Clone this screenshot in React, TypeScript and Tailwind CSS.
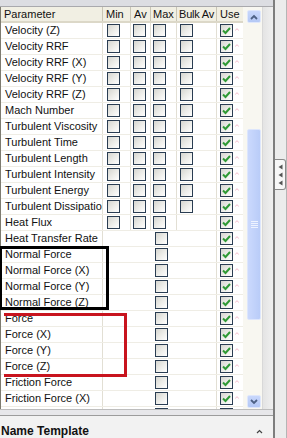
import React from 'react';

type Kind = 'full' | 'noBulk' | 'merged';

const rows: { name: string; kind: Kind }[] = [
  { name: 'Velocity (Z)', kind: 'full' },
  { name: 'Velocity RRF', kind: 'full' },
  { name: 'Velocity RRF (X)', kind: 'full' },
  { name: 'Velocity RRF (Y)', kind: 'full' },
  { name: 'Velocity RRF (Z)', kind: 'full' },
  { name: 'Mach Number', kind: 'full' },
  { name: 'Turbulent Viscosity', kind: 'full' },
  { name: 'Turbulent Time', kind: 'full' },
  { name: 'Turbulent Length', kind: 'full' },
  { name: 'Turbulent Intensity', kind: 'full' },
  { name: 'Turbulent Energy', kind: 'full' },
  { name: 'Turbulent Dissipation', kind: 'full' },
  { name: 'Heat Flux', kind: 'noBulk' },
  { name: 'Heat Transfer Rate', kind: 'merged' },
  { name: 'Normal Force', kind: 'merged' },
  { name: 'Normal Force (X)', kind: 'merged' },
  { name: 'Normal Force (Y)', kind: 'merged' },
  { name: 'Normal Force (Z)', kind: 'merged' },
  { name: 'Force', kind: 'merged' },
  { name: 'Force (X)', kind: 'merged' },
  { name: 'Force (Y)', kind: 'merged' },
  { name: 'Force (Z)', kind: 'merged' },
  { name: 'Friction Force', kind: 'merged' },
  { name: 'Friction Force (X)', kind: 'merged' },
  // next row only peeks in at the bottom edge
  { name: '', kind: 'merged' },
];

const Box: React.FC<{ checked?: boolean }> = ({ checked }) => (
  <div className="w-[13px] h-[13px] border border-[#2a3d52] bg-gradient-to-br from-[#d6d6d0] via-[#ecece8] to-white flex items-center justify-center">
    {checked && (
      <svg width="9" height="9" viewBox="0 0 9 9">
        <path d="M1 4.5 L3.5 7 L8 2" fill="none" stroke="#2f9a35" strokeWidth="2" />
      </svg>
    )}
  </div>
);

const Mark = () => (
  <svg width="4" height="4" viewBox="0 0 4 4" className="ml-[2px] self-start mt-[3px]">
    <path d="M0.5 3.5 Q2 0 3.5 3.5" fill="none" stroke="#f2bccb" strokeWidth="1" />
  </svg>
);

const Row: React.FC<{ name: string; kind: Kind }> = ({ name, kind }) => (
  <div className="grid grid-cols-[102px_28px_20px_26px_40px_26px] h-[16px] border-b border-[#efede5]">
    <div className="border-r border-[#e2dfd4] pl-[4px] leading-[15px] whitespace-nowrap overflow-hidden">{name}</div>
    {kind === 'merged' ? (
      <div className="col-span-4 border-r border-[#e2dfd4] flex justify-center pl-[3px] pt-[1px]">
        <Box />
      </div>
    ) : (
      <>
        <div className="border-r border-[#e2dfd4] pl-[4px] pt-[1px]"><Box /></div>
        <div className="border-r border-[#e2dfd4] pl-[2px] pt-[1px]"><Box /></div>
        <div className="border-r border-[#e2dfd4] pl-[2px] pt-[1px]"><Box /></div>
        <div className="border-r border-[#e2dfd4] pl-[3px] pt-[1px]">{kind === 'full' && <Box />}</div>
      </>
    )}
    <div className="pl-[3px] pt-[1px] flex">
      <Box checked />
      <Mark />
    </div>
  </div>
);

const Chevron: React.FC<{ up?: boolean }> = ({ up }) => (
  <svg width="8" height="6" viewBox="0 0 8 6">
    <path d={up ? 'M1 5 L4 2 L7 5' : 'M1 1 L4 4 L7 1'} fill="none" stroke="#4d6185" strokeWidth="1.8" />
  </svg>
);

const ScrollBtn: React.FC<{ up?: boolean }> = ({ up }) => (
  <div className="w-[14px] h-[13px] rounded-[2px] border border-[#dfe7fb] bg-gradient-to-b from-[#c8d7fc] to-[#b4c8f5] flex items-center justify-center">
    <Chevron up={up} />
  </div>
);

export default function App() {
  return (
    <div
      className="w-[287px] h-[438px] overflow-hidden flex bg-[#ececec] text-[11px] text-[#111]"
      style={{ fontFamily: '"Liberation Sans", Arial, sans-serif' }}
    >
      <div className="w-[273px] flex flex-col">
        <div className="h-[10px] bg-[#dcdde2] border-b border-[#a9a9ad]" />
        <div className="relative h-[402px] flex bg-white">
          <div className="w-[1px] bg-[#7d7b70]" />
          <div className="w-[242px] overflow-hidden">
            <div className="grid grid-cols-[102px_28px_20px_26px_40px_26px] h-[16px] bg-[#f1efe3] border-b-2 border-[#dcd8c8] leading-[14px] whitespace-nowrap">
              <div className="border-r border-[#c9c5b5] pl-[3px]">Parameter</div>
              <div className="border-r border-[#c9c5b5] pl-[3px]">Min</div>
              <div className="border-r border-[#c9c5b5] pl-[3px]">Av</div>
              <div className="border-r border-[#c9c5b5] pl-[2px]">Max</div>
              <div className="border-r border-[#c9c5b5] pl-[2px] tracking-[-0.2px]">Bulk Av</div>
              <div className="pl-[3px]">Use</div>
            </div>
            {rows.map((r, i) => (
              <Row key={i} {...r} />
            ))}
          </div>
          <div className="w-[19px] bg-[#f8f7f1] flex flex-col pl-[4px] pr-[1px] pt-[3px] pb-[1px]">
            <ScrollBtn up />
            <div className="flex-1 pt-[106px] pb-[75px]">
              <div className="h-full rounded-[2px] border border-[#dde6fc] bg-gradient-to-r from-[#cbd9fd] to-[#b9ccf8] flex items-center justify-center">
                <div className="flex flex-col gap-[1px]">
                  <div className="w-[7px] h-[1px] bg-[#eef3ff]" />
                  <div className="w-[7px] h-[1px] bg-[#eef3ff]" />
                  <div className="w-[7px] h-[1px] bg-[#eef3ff]" />
                  <div className="w-[7px] h-[1px] bg-[#eef3ff]" />
                </div>
              </div>
            </div>
            <ScrollBtn />
          </div>
          <div className="flex-1 bg-gradient-to-r from-[#e4e4e4] to-[#f0f0f0] border-l border-[#d8d8d8]" />
          <div className="absolute left-0 top-[239px] w-[109px] h-[64px] border-[3px] border-l-2 border-black" />
          <div className="absolute left-[4px] top-[306px] w-[123px] h-[64px] border-[3px] border-l-0 border-[#c8141e]" />
        </div>
        <div className="h-[9px] bg-[#e7e7ea] border-t border-[#bdbdbd] border-b border-b-[#9c9c9c]" />
        <div className="flex-1 bg-[#f2f2f2] flex items-start justify-between pt-[8px] pl-[1px] pr-[10px]">
          <span className="font-bold text-[12px] leading-[14px]">Name Template</span>
          <svg width="7" height="5" viewBox="0 0 7 5" className="mt-[5px]">
            <path d="M1 4 L3.5 1.5 L6 4" fill="none" stroke="#444" strokeWidth="1.2" />
          </svg>
        </div>
      </div>
      <div className="flex-1 flex">
        <div className="w-[2px] bg-[#7e7e7e]" />
        <div className="flex-1 bg-[#ececec] border-r border-[#b5b5b5] pt-[159px]">
          <div className="w-[11px] h-[31px] bg-[#f7f7f7] border border-l-0 border-[#8a8a8a] rounded-r-[3px] flex flex-col items-center justify-center gap-[2px]">
            {[0, 1, 2].map((i) => (
              <svg key={i} width="5" height="6" viewBox="0 0 5 6">
                <path d="M4.5 0.5 L0.5 3 L4.5 5.5 Z" fill="#555" />
              </svg>
            ))}
          </div>
        </div>
      </div>
    </div>
  );
}
